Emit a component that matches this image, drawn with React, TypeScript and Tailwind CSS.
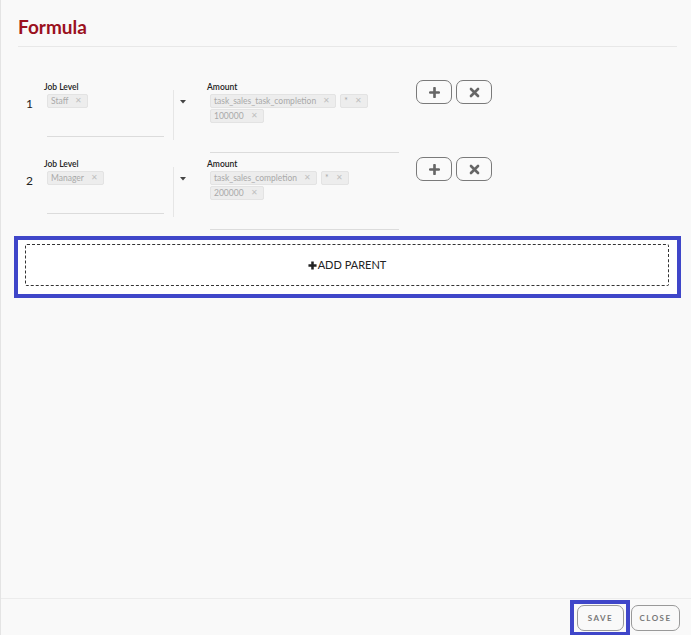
import React from "react";

type Row = { n: number; level: string; amount: string[] };

const rows: Row[] = [
  { n: 1, level: "Staff", amount: ["task_sales_task_completion", "*", "100000"] },
  { n: 2, level: "Manager", amount: ["task_sales_completion", "*", "200000"] },
];

function Tag({ label }: { label: string }) {
  return (
    <span className="inline-flex h-[14px] items-center rounded-[2px] border border-[#e3e3e3] bg-[#ededed] pl-[3px] pr-[5px] text-[8.5px] leading-none text-[#a9a9a9]">
      {label}
      <span className="ml-[7px] text-[7.5px] text-[#c0c0c0]">✕</span>
    </span>
  );
}

function IconButton({ kind }: { kind: "plus" | "x" }) {
  return (
    <button className="flex h-[24px] w-[36px] items-center justify-center rounded-[7px] border border-[#7a7a7a] bg-[#fafafa]">
      <svg width="11" height="11" viewBox="0 0 10 10" stroke="#666" strokeWidth="2.4" strokeLinecap="round">
        {kind === "plus" ? (
          <path d="M5 1v8M1 5h8" />
        ) : (
          <path d="M1.8 1.8l6.4 6.4M8.2 1.8l-6.4 6.4" />
        )}
      </svg>
    </button>
  );
}

function FormulaRow({ row }: { row: Row }) {
  return (
    <div className="flex h-[77px]">
      <div className="w-[26px] pl-[8px] pt-[16px] text-[12px] leading-[16px] text-[#222]">{row.n}</div>
      <div className="w-[120px] pt-[1px]">
        <div className="text-[8.5px] font-semibold leading-[12px] text-[#222]">Job Level</div>
        <div className="ml-[3px] mt-[1px] flex h-[43px] w-[117px] items-start border-b border-[#dcdcdc]">
          <Tag label={row.level} />
        </div>
      </div>
      <div className="ml-[9px] mt-[10px] h-[50px] w-px bg-[#e6e6e6]" />
      <div className="w-[33px] pl-[6px] pt-[20px]">
        <svg width="6" height="4" viewBox="0 0 6 4" className="block">
          <path d="M0 0h6L3 3.5z" fill="#444" />
        </svg>
      </div>
      <div className="w-[192px] pt-[1px]">
        <div className="text-[8.5px] font-semibold leading-[12px] text-[#222]">Amount</div>
        <div className="ml-[3px] mt-[1px] flex h-[59px] w-[189px] flex-wrap content-start items-start gap-x-[4px] gap-y-[1px] border-b border-[#dcdcdc]">
          {row.amount.map((a, i) => (
            <Tag key={i} label={a} />
          ))}
        </div>
      </div>
      <div className="ml-[17px] flex items-start gap-[4px]">
        <IconButton kind="plus" />
        <IconButton kind="x" />
      </div>
    </div>
  );
}

export default function App() {
  return (
    <div className="flex h-screen w-full flex-col overflow-hidden border-l border-[#e4e4e4] bg-[#f9f9f9] font-['Lato',sans-serif]">
      <div className="flex-1">
        <div className="ml-[17px] mr-[14px] border-b border-[#e8e8e8] pb-[8px] pt-[16px]">
          <h2 className="text-[19px] font-bold leading-[22px] text-[#9b111e]">Formula</h2>
        </div>
        <div className="mt-[33px] pl-[17px]">
          {rows.map((r) => (
            <FormulaRow key={r.n} row={r} />
          ))}
        </div>
        <div className="ml-[13px] mr-[10px] mt-[2px] border-4 border-[#3f46c9] bg-white pb-[8px] pl-[7px] pr-[8px] pt-[4px]">
          <button className="flex h-[42px] w-full items-center justify-center gap-[1px] rounded-[2px] border border-dashed border-[#333] text-[11px] text-[#222]">
            <svg width="9" height="9" viewBox="0 0 10 10" stroke="#222" strokeWidth="2.8">
              <path d="M5 0.5v9M0.5 5h9" />
            </svg>
            ADD PARENT
          </button>
        </div>
      </div>
      <div className="flex h-[37px] shrink-0 items-start justify-end border-t border-[#ececec] pr-[11px] pt-[1px]">
        <div className="flex border-4 border-[#3f46c9] pb-[1px] pl-[3px] pr-[2px] pt-[1px]">
          <button className="h-[26px] w-[47px] rounded-[7px] border border-[#999] text-[8px] font-bold tracking-[0.18em] text-[#777]">
            SAVE
          </button>
        </div>
        <button className="ml-[1px] mt-[5px] h-[26px] w-[49px] rounded-[7px] border border-[#999] text-[8px] font-bold tracking-[0.18em] text-[#777]">
          CLOSE
        </button>
      </div>
    </div>
  );
}
